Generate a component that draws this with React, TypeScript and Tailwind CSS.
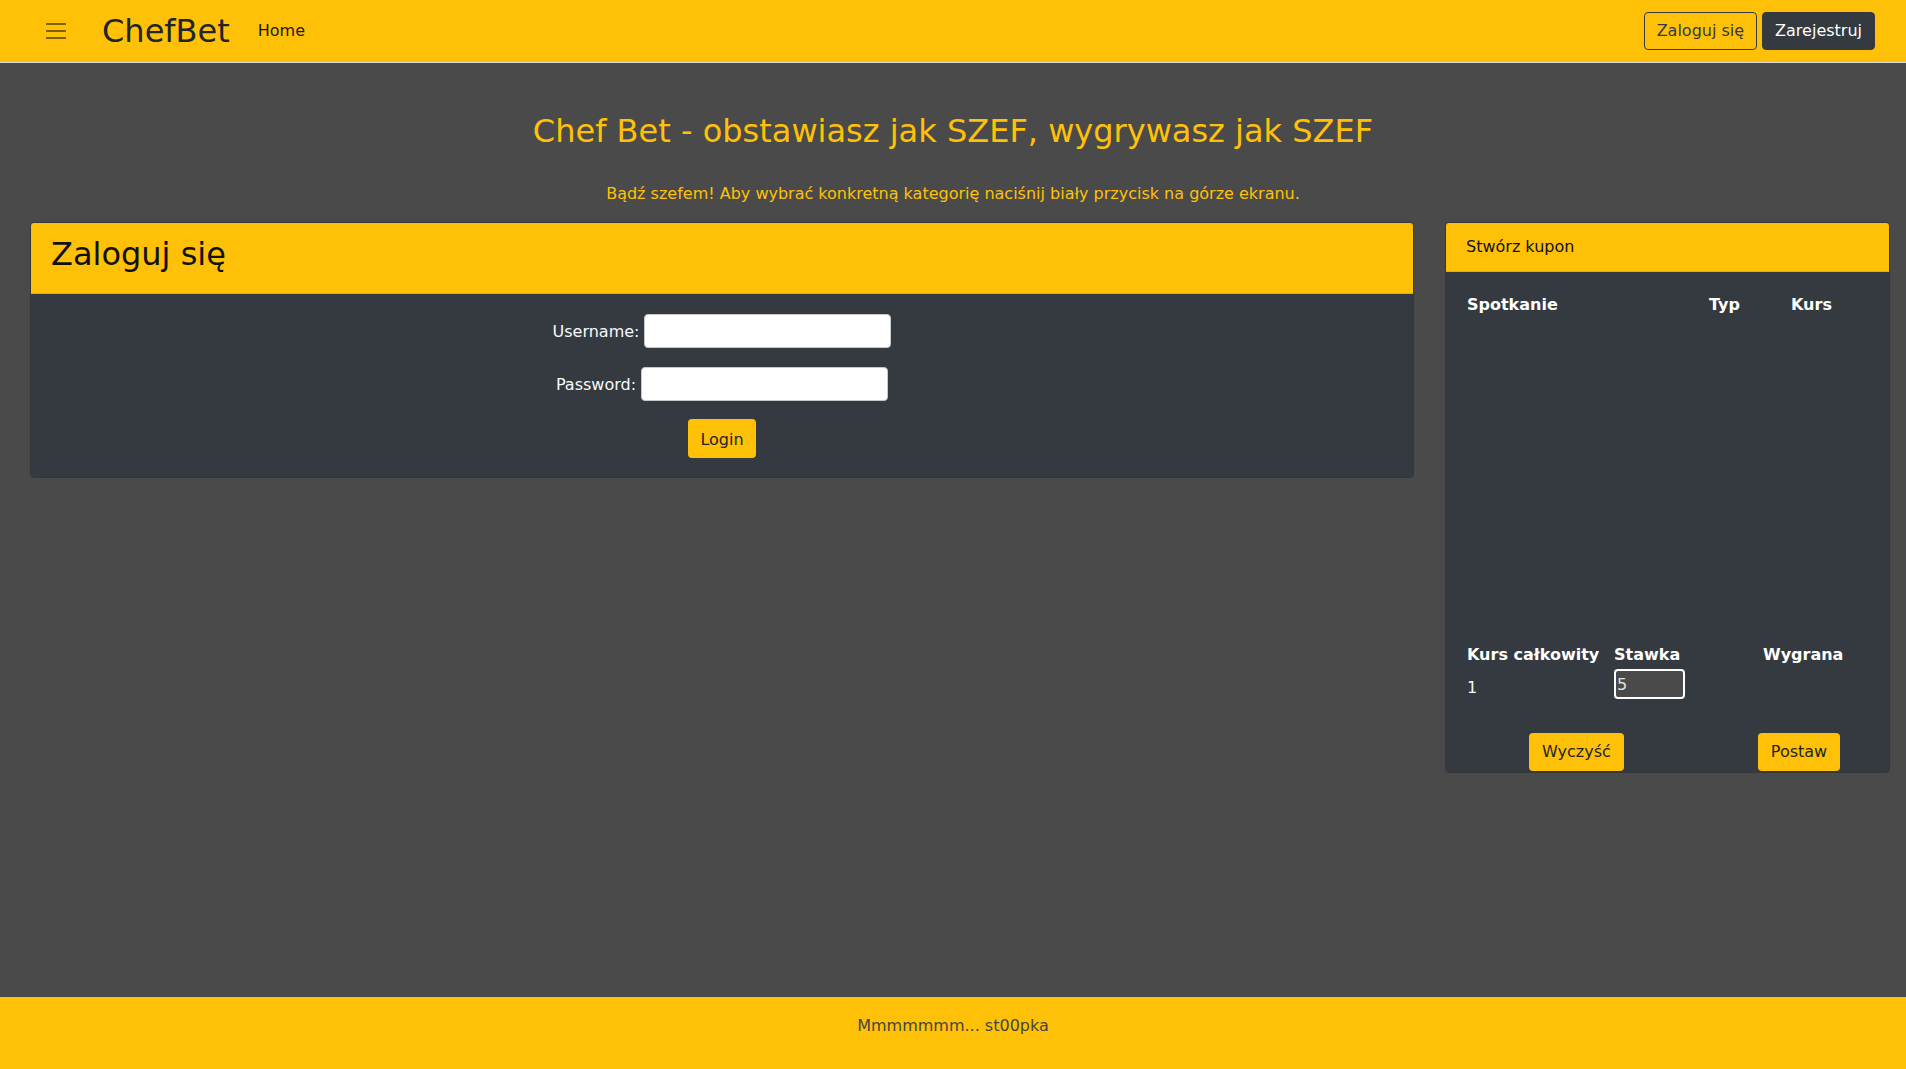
import React from "react";

export default function App() {
  return (
    <div className="flex min-h-screen flex-col bg-[#4a4a4a] font-['DejaVu_Sans',sans-serif] text-base">
      <nav className="flex h-[63px] items-center border-b border-[#dcdcdc] bg-[#ffc107] pl-[46px] pr-[31px]">
        <svg width="20" height="16" viewBox="0 0 20 16" className="shrink-0">
          <path d="M0 1h20M0 8h20M0 15h20" stroke="rgba(0,0,0,0.5)" strokeWidth="2" />
        </svg>
        <span className="ml-[36px] text-[32px] leading-[38px] text-[#212529]">ChefBet</span>
        <a className="ml-[28px] leading-6 text-[#1a1a1a]">Home</a>
        <div className="ml-auto flex gap-[5px]">
          <button className="h-[38px] rounded-[4px] border border-[#343a40] px-3 leading-6 text-[#343a40]">
            Zaloguj się
          </button>
          <button className="h-[38px] rounded-[4px] border border-[#343a40] bg-[#343a40] px-3 leading-6 text-white">
            Zarejestruj
          </button>
        </div>
      </nav>

      <main className="flex-1">
        <h2 className="mt-[49px] text-center text-[32px] font-normal leading-[38px] text-[#ffc107]">
          Chef Bet - obstawiasz jak SZEF, wygrywasz jak SZEF
        </h2>
        <p className="mt-[32px] text-center leading-6 text-[#ffc107]">
          Bądź szefem! Aby wybrać konkretną kategorię naciśnij biały przycisk na górze ekranu.
        </p>

        <div className="mt-[16px] flex items-start gap-[31px] pl-[30px] pr-[16px]">
          {/* Login card */}
          <div className="w-[1384px] overflow-hidden rounded-[4px] border border-black/25">
            <div className="border-b border-black/10 bg-[#ffc107] px-5 pb-5 pt-3 text-[32px] leading-[38px] text-[#111]">
              Zaloguj się
            </div>
            <div className="flex flex-col items-center bg-[#343a40] pb-[19px] pt-5">
              <div className="flex items-center">
                <label className="pt-[2px] leading-6 text-[#f8f9fa]">Username:</label>
                <input className="ml-[5px] h-[34px] w-[247px] rounded-[4px] border border-[#c8c8c8] bg-white" />
              </div>
              <div className="mt-[19px] flex items-center">
                <label className="pt-[2px] leading-6 text-[#f8f9fa]">Password:</label>
                <input type="password" className="ml-[5px] h-[34px] w-[247px] rounded-[4px] border border-[#c8c8c8] bg-white" />
              </div>
              <button className="mt-[18px] h-[39px] rounded-[4px] bg-[#ffc107] px-3 pt-[3px] leading-6 text-[#212529]">
                Login
              </button>
            </div>
          </div>

          {/* Coupon card */}
          <div className="w-[445px] overflow-hidden rounded-[4px] border border-black/25">
            <div className="border-b border-black/10 bg-[#ffc107] px-5 py-3 leading-6 text-[#111]">
              Stwórz kupon
            </div>
            <div className="bg-[#343a40] px-5 pb-px pt-[21px]">
              <div className="grid grid-cols-[242px_82px_1fr] pl-px font-bold leading-6 text-white">
                <div>Spotkanie</div>
                <div>Typ</div>
                <div>Kurs</div>
              </div>
              <div className="h-[326px]" />
              <div className="grid grid-cols-[147px_149px_1fr] pl-px font-bold leading-6 text-white">
                <div>Kurs całkowity</div>
                <div>Stawka</div>
                <div>Wygrana</div>
              </div>
              <div className="flex h-[32px] items-start pl-px">
                <div className="w-[147px] pt-[9px] leading-6 text-[#f8f9fa]">1</div>
                <div className="w-[149px] pt-[2px]">
                  <input
                    defaultValue="5"
                    className="h-[30px] w-[71px] rounded-[4px] border-2 border-white bg-[#4a4a4a] px-px leading-6 text-[#e0e0e0]"
                  />
                </div>
              </div>
              <div className="mt-[34px] flex">
                <button className="ml-[63px] h-[38px] rounded-[4px] bg-[#ffc107] px-[13px] leading-6 text-[#212529]">
                  Wyczyść
                </button>
                <button className="ml-[134px] h-[38px] rounded-[4px] bg-[#ffc107] px-[13px] leading-6 text-[#212529]">
                  Postaw
                </button>
              </div>
            </div>
          </div>
        </div>
      </main>

      <footer className="h-[72px] bg-[#ffc107] pt-[17px] text-center leading-6 text-[#454545]">
        Mmmmmmm... st00pka
      </footer>
    </div>
  );
}
